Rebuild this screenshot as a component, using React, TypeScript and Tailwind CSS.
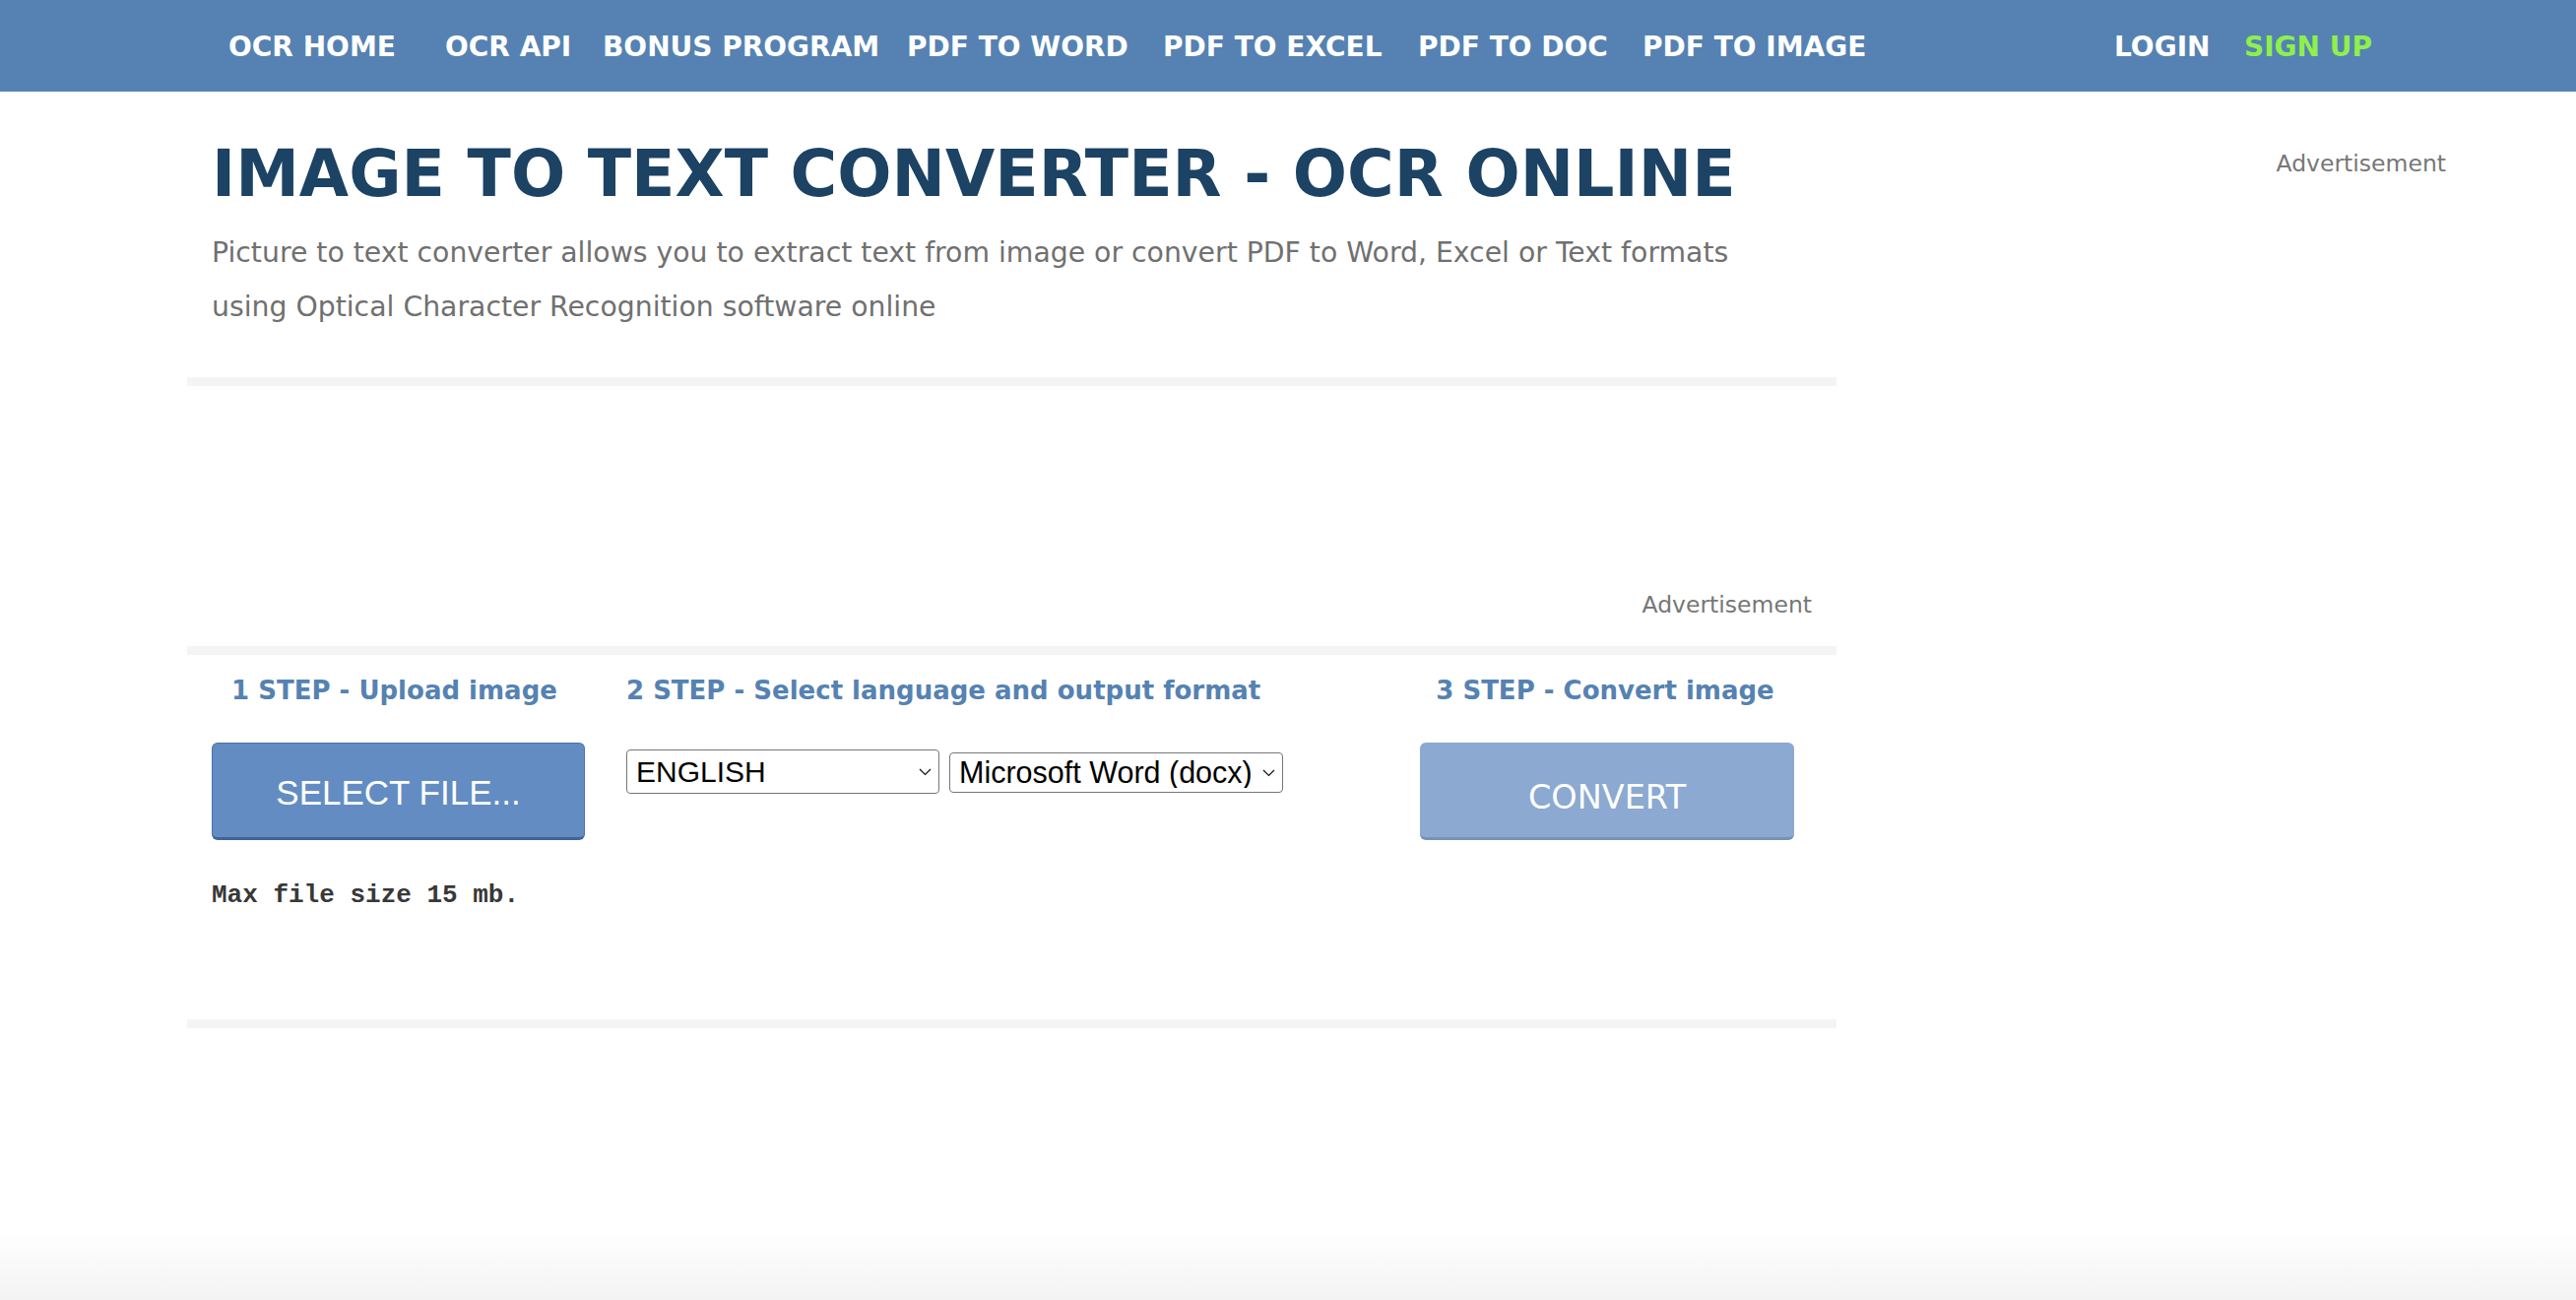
import React from "react";

const navItems: { label: string; w: string }[] = [
  { label: "OCR HOME", w: "w-[220px]" },
  { label: "OCR API", w: "w-[160px]" },
  { label: "BONUS PROGRAM", w: "w-[309px]" },
  { label: "PDF TO WORD", w: "w-[260px]" },
  { label: "PDF TO EXCEL", w: "w-[259px]" },
  { label: "PDF TO DOC", w: "w-[228px]" },
  { label: "PDF TO IMAGE", w: "w-[260px]" },
];

function Chevron() {
  return (
    <svg
      className="pointer-events-none absolute right-[8px] top-1/2 -translate-y-1/2"
      width="13"
      height="8"
      viewBox="0 0 13 8"
      fill="none"
    >
      <path d="M1 1 L6.5 6.5 L12 1" stroke="#111" strokeWidth="1.2" />
    </svg>
  );
}

export default function App() {
  return (
    <div className="min-h-[1320px] bg-white font-['DejaVu_Sans',sans-serif]">
      {/* NAV */}
      <nav className="flex h-[93px] items-center bg-[#5582b2] pl-[232px] pt-[2px] text-[28px] font-bold text-white">
        {navItems.map((n) => (
          <a key={n.label} className={`${n.w} shrink-0 whitespace-nowrap`}>
            {n.label}
          </a>
        ))}
        <a className="ml-[219px] w-[132px] shrink-0 whitespace-nowrap">LOGIN</a>
        <a className="shrink-0 whitespace-nowrap text-[#8ef04d]">SIGN UP</a>
      </nav>

      <div className="flex">
        {/* MAIN */}
        <main className="ml-[190px] w-[1675px] shrink-0">
          <div className="pl-[25px] pr-[25px]">
            <h1 className="mt-[51px] whitespace-nowrap text-[65px] font-bold leading-none text-[#1c4264]">
              IMAGE TO TEXT CONVERTER - OCR ONLINE
            </h1>
            <p className="mt-[20px] max-w-[1590px] text-[28.3px] leading-[55px] text-[#707070]">
              Picture to text converter allows you to extract text from image or convert PDF to Word, Excel or Text formats using Optical Character Recognition software online
            </p>
          </div>

          <div className="mt-[44px] h-[9px] bg-[#f4f4f4]" />

          <div className="flex h-[264px] items-end justify-end pb-[28px] pr-[25px]">
            <span className="text-[23.5px] leading-[28px] text-[#777777]">Advertisement</span>
          </div>

          <div className="h-[9px] bg-[#f4f4f4]" />

          {/* STEPS */}
          <div className="flex pl-[25px] pt-[21px]">
            <div className="flex w-[379px] shrink-0 flex-col">
              <h3 className="pr-[8px] text-center text-[26px] font-bold leading-[31px] text-[#5582b2]">
                1 STEP - Upload image
              </h3>
              <button className="mt-[37px] flex h-[99px] w-[379px] items-center justify-center rounded-[6px] border border-b-[3px] border-[#4a73a8] border-b-[#3f6597] bg-[#638dc2] pt-[6px] font-['Liberation_Sans',sans-serif] text-[35px] text-white">
                SELECT FILE...
              </button>
              <div className="mt-[41px] whitespace-nowrap font-['Liberation_Mono',monospace] text-[26px] font-bold leading-[30px] text-[#383838]">
                Max file size 15 mb.
              </div>
            </div>

            <div className="ml-[42px] w-[806px] shrink-0">
              <h3 className="text-[26px] font-bold leading-[31px] text-[#5582b2]">
                2 STEP - Select language and output format
              </h3>
              <div className="mt-[44px] flex items-start gap-[10px] font-['Liberation_Sans',sans-serif]">
                <div className="relative">
                  <select
                    defaultValue="ENGLISH"
                    className="h-[45px] w-[318px] appearance-none rounded-[4px] border border-[#767676] bg-white pl-[9px] pr-[28px] text-[30px] leading-none text-black outline-none"
                  >
                    <option>ENGLISH</option>
                    <option>GERMAN</option>
                    <option>FRENCH</option>
                  </select>
                  <Chevron />
                </div>
                <div className="relative mt-[3px]">
                  <select
                    defaultValue="docx"
                    className="h-[41px] w-[339px] appearance-none rounded-[4px] border border-[#767676] bg-white pl-[9px] pr-[22px] text-[30.5px] leading-none text-black outline-none"
                  >
                    <option value="docx">Microsoft Word (docx)</option>
                    <option value="xlsx">Microsoft Excel (xlsx)</option>
                    <option value="txt">Text Plain (txt)</option>
                  </select>
                  <Chevron />
                </div>
              </div>
            </div>

            <div className="flex w-[380px] shrink-0 flex-col">
              <h3 className="pr-[4px] text-center text-[26px] font-bold leading-[31px] text-[#5582b2]">
                3 STEP - Convert image
              </h3>
              <button className="mt-[37px] flex h-[99px] w-[380px] items-center justify-center rounded-[6px] border-b-[3px] border-b-[#7891b4] bg-[#8ba9d1] pt-[16px] text-[33.5px] text-white">
                CONVERT
              </button>
            </div>
          </div>

          <div className="mt-[111px] h-[9px] bg-[#f4f4f4]" />
        </main>

        {/* SIDEBAR */}
        <aside className="flex flex-1 justify-end pr-[132px] pt-[59px]">
          <span className="text-[23.5px] leading-[28px] text-[#777777]">Advertisement</span>
        </aside>
      </div>

      <div className="pointer-events-none fixed inset-x-0 bottom-0 h-[70px] bg-gradient-to-b from-white/0 to-[#f3f3f3]" />
    </div>
  );
}
